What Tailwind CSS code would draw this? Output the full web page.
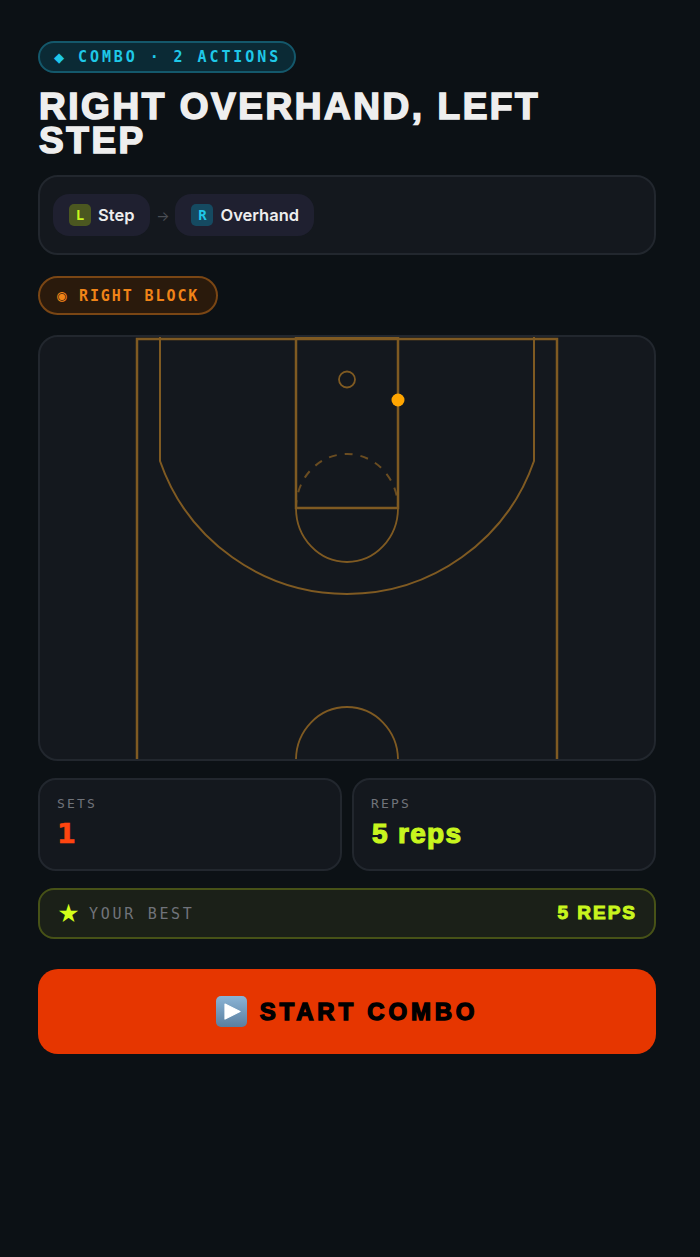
<!DOCTYPE html>
<html lang="en">

<head>
  <meta charset="UTF-8">
  <meta name="viewport" content="width=device-width, initial-scale=1.0">
  <title>Right Overhand, Left Step</title>
  <script src="https://cdn.jsdelivr.net/npm/@tailwindcss/browser@4"></script>
</head>

<body class="bg-[#0c1115] font-['Inter',sans-serif] min-h-screen text-[#eeeeee]">
  <main class="flex flex-col items-stretch pt-[41px] px-[38px] w-[694px]">
    <!-- Header -->
    <div class="self-start flex items-center h-[32px] pl-[14px] pr-[13px] pt-[1px] rounded-full border-2 border-[#14586b] bg-[#0b2a35] font-['DejaVu_Sans_Mono',monospace] font-bold text-[15px] tracking-[2.92px] text-[#1fc8e8]">
      <span class="text-[17px] leading-none tracking-normal w-[24px]">◆</span>COMBO · 2 ACTIONS
    </div>
    <h1 class="mt-[17px] ml-[1px] font-['Liberation_Sans',sans-serif] text-[37px] leading-[34px] font-bold tracking-[2.55px] [-webkit-text-stroke:1.6px_#eeeeee] max-w-[560px]">RIGHT OVERHAND, LEFT STEP</h1>

    <!-- Sequence -->
    <div class="mt-[17px] h-[80px] flex items-center px-[13px] rounded-[20px] border-2 border-[#22272e] bg-[#14181e]">
      <div class="flex items-center gap-[7px] h-[42px] pl-[16px] pr-[16px] rounded-[16px] bg-[#1f2030]">
        <span class="w-[22px] h-[22px] rounded-[5px] bg-[#4b5720] text-[#c8f51e] text-[14px] font-bold flex items-center justify-center font-['DejaVu_Sans_Mono',monospace]">L</span>
        <span class="text-[16.5px] font-semibold">Step</span>
      </div>
      <span class="w-[25px] text-center text-[#4a4e55] text-[14px]">→</span>
      <div class="flex items-center gap-[7px] h-[42px] pl-[16px] pr-[15px] rounded-[16px] bg-[#1f2030]">
        <span class="w-[22px] h-[22px] rounded-[5px] bg-[#154a61] text-[#1fc8e8] text-[14px] font-bold flex items-center justify-center font-['DejaVu_Sans_Mono',monospace]">R</span>
        <span class="text-[16.5px] font-semibold">Overhand</span>
      </div>
    </div>

    <!-- Zone -->
    <div class="mt-[21px] self-start flex items-center h-[39px] pl-[17px] pr-[17px] pt-[1px] rounded-full border-2 border-[#7a4614] bg-[#2a1a0c] font-['DejaVu_Sans_Mono',monospace] font-bold text-[15px] tracking-[1.9px] text-[#f08418]">
      <span class="text-[16px] leading-none tracking-normal w-[22px]">◉</span>RIGHT BLOCK
    </div>

    <!-- Court -->
    <div class="mt-[20px] h-[426px] rounded-[20px] border-2 border-[#22272e] bg-[#14181e] overflow-hidden">
      <svg class="block" width="614" height="422" viewBox="40 337 614 422" fill="none" stroke="#7f5a22">
        <path stroke-width="2.5" d="M137 760V339H557V760" />
        <path stroke-width="2.5" d="M296 338H398V508H296Z" />
        <path stroke-width="2" d="M160 336V461A198 198 0 0 0 534 461V336" />
        <circle stroke-width="1.8" cx="347" cy="379.5" r="8" />
        <path stroke-width="1.8" d="M296 508A51 54 0 0 0 398 508" />
        <path stroke-width="2" stroke-dasharray="8 8" stroke-opacity="0.8" d="M296 508A51 54 0 0 1 398 508" />
        <path stroke-width="1.8" d="M296 760A51 53 0 0 1 398 760" />
        <circle cx="398" cy="400" r="6.5" fill="#ffa500" stroke="none" />
      </svg>
    </div>

    <!-- Stats -->
    <div class="mt-[17px] grid grid-cols-2 gap-[10px]">
      <div class="h-[93px] rounded-[18px] border-2 border-[#22272e] bg-[#14181e] pl-[17px] pt-[14px]">
        <div class="font-['DejaVu_Sans_Mono',monospace] text-[13px] tracking-[2.2px] text-[#70737a]">SETS</div>
        <div class="mt-[3px] font-['DejaVu_Sans',sans-serif] text-[27px] leading-[34px] font-bold [-webkit-text-stroke:0.6px_#ff4510] text-[#ff4510]">1</div>
      </div>
      <div class="h-[93px] rounded-[18px] border-2 border-[#22272e] bg-[#14181e] pl-[17px] pt-[14px]">
        <div class="font-['DejaVu_Sans_Mono',monospace] text-[13px] tracking-[2.2px] text-[#70737a]">REPS</div>
        <div class="mt-[3px] ml-[1px] font-['Liberation_Sans',sans-serif] text-[28px] leading-[34px] font-bold tracking-[1.3px] [-webkit-text-stroke:1.2px_#c8f51e] text-[#c8f51e]">5 reps</div>
      </div>
    </div>

    <!-- Best -->
    <div class="mt-[17px] h-[51px] flex items-center justify-between pl-[17px] pr-[17px] rounded-[16px] border-2 border-[#475217] bg-[#1b2018]">
      <div class="flex items-center gap-[9px]">
        <span class="text-[22px] leading-none text-[#d4ff1a]">★</span>
        <span class="pt-[1px] font-['DejaVu_Sans_Mono',monospace] text-[15px] tracking-[2.7px] text-[#70737a]">YOUR BEST</span>
      </div>
      <span class="font-['Liberation_Sans',sans-serif] text-[19px] font-bold tracking-[2px] [-webkit-text-stroke:1px_#c8f51e] text-[#c8f51e]">5 REPS</span>
    </div>

    <!-- Start -->
    <button class="mt-[30px] h-[85px] flex items-center justify-center gap-[13px] rounded-[20px] bg-[#e63600] text-black font-['Liberation_Sans',sans-serif] text-[24px] font-bold tracking-[3.8px] [-webkit-text-stroke:1.4px_#000]">
      <svg width="31" height="31" viewBox="0 0 31 31">
        <defs>
          <linearGradient id="playBg" x1="0" y1="0" x2="0" y2="1">
            <stop offset="0" stop-color="#8ab4d6" />
            <stop offset="1" stop-color="#5b7f9f" />
          </linearGradient>
        </defs>
        <rect width="31" height="31" rx="5" fill="url(#playBg)" />
        <path d="M9 8L24 15.5L9 23Z" fill="#fff" stroke="#fff" stroke-width="1.2" stroke-linejoin="round" />
      </svg>
      START COMBO
    </button>
  </main>
</body>

</html>
